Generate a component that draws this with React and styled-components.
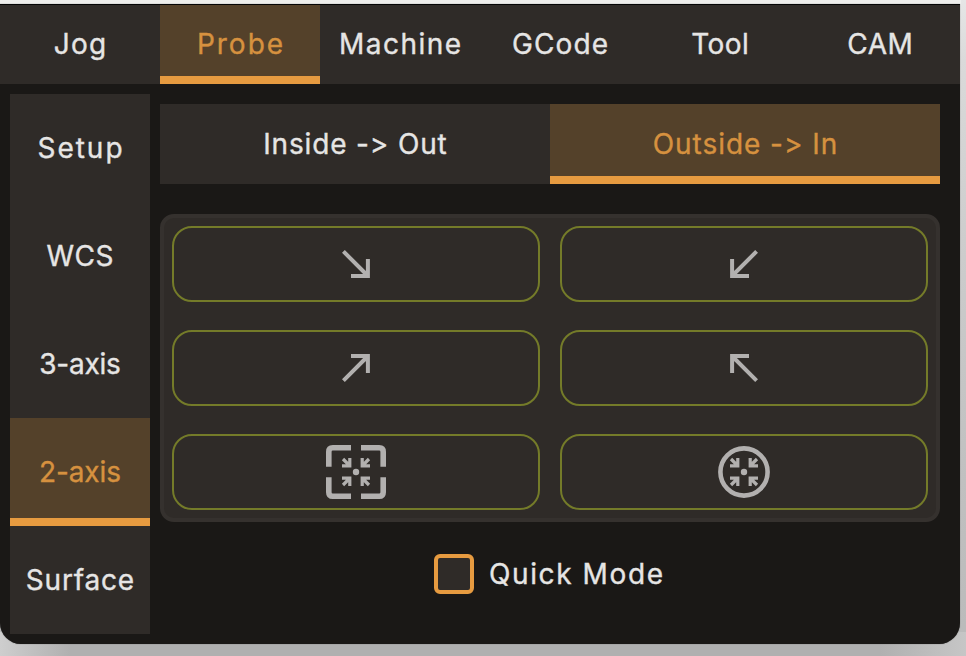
import React from "react";
import styled, { createGlobalStyle, css } from "styled-components";

const color = {
  base: "#1a1816",
  surface: "#2f2b28",
  edge: "#35312e",
  activeBg: "#54412a",
  accent: "#e79b40",
  activeText: "#d6913f",
  text: "#e6e5e4",
  outline: "#747b29",
  icon: "#b2b0af",
};

const GlobalStyle = createGlobalStyle`
  *, *::before, *::after { box-sizing: border-box; }
  html, body { margin: 0; height: 656px; overflow: hidden; }
  button { border: 0; padding: 0; margin: 0; background: none; color: inherit; font: inherit; }
`;

const Desktop = styled.div`
  width: 966px;
  height: 656px;
  padding-top: 4px;
  background:
    linear-gradient(90deg, #cecece 0, #b0b0b0 70px, #b0b0b0 880px, #c6c6c6 966px) 0 100% / 966px 24px no-repeat,
    linear-gradient(#eeeeec, #eeeeec) 0 0 / 961px 4px no-repeat,
    linear-gradient(180deg, #e6e6e6 0, #dadada 60px, #cdcdcd 240px, #c0c0c0 480px, #bababa 656px);
  color: ${color.text};
  font-family: Inter, "Liberation Sans", sans-serif;
  font-size: 28px;
  line-height: 34px;
  font-feature-settings: "calt" 0;
`;

const Window = styled.div`
  width: 960px;
  height: 640px;
  display: flex;
  flex-direction: column;
  overflow: hidden;
  border-top: 1px solid #050505;
  border-radius: 0 0 21px 21px;
  background: ${color.base};
  box-shadow: 0 0 1px 0 #555;
`;

const TabBar = styled.nav`
  flex: none;
  display: grid;
  grid-template-columns: repeat(6, 1fr);
  height: 79px;
  background: ${color.surface};
`;

const activeTab = css`
  background: ${color.activeBg};
  color: ${color.activeText};
  box-shadow: inset 0 -8px 0 ${color.accent};
`;

const Tab = styled.button`
  display: flex;
  align-items: center;
  justify-content: center;
  padding-bottom: 1px;
  white-space: nowrap;
  ${(p) => p.$active && activeTab}
`;

const Label = styled.span`
  letter-spacing: ${(p) => p.$track}px;
  margin-right: ${(p) => -p.$track}px;
  white-space: nowrap;
  -webkit-text-stroke: 0.35px currentColor;
`;

const Body = styled.div`
  flex: 1;
  display: flex;
  gap: 10px;
  padding: 10px 20px 9px 10px;
`;

const SideBar = styled.nav`
  flex: none;
  width: 140px;
  height: 540px;
  display: grid;
  grid-template-rows: repeat(5, 1fr);
  background: ${color.surface};
`;

const Content = styled.main`
  flex: 1;
  display: flex;
  flex-direction: column;
  padding-top: 10px;
`;

const Directions = styled.div`
  display: grid;
  grid-template-columns: 1fr 1fr;
  height: 80px;
  background: ${color.surface};
`;

const Panel = styled.section`
  display: grid;
  grid-template-columns: 1fr 1fr;
  grid-template-rows: repeat(3, 76px);
  gap: 28px 20px;
  margin-top: 30px;
  padding: 8px;
  border: 4px solid ${color.edge};
  border-radius: 14px;
  background: ${color.surface};
`;

const ProbeButton = styled.button`
  display: flex;
  align-items: center;
  justify-content: center;
  && {
    border: 2px solid ${color.outline};
  }
  border-radius: 20px;
`;

const Icon = styled.svg`
  display: block;
  fill: none;
  stroke: ${color.icon};
  transform: rotate(${(p) => p.$turn || 0}deg);
`;

const QuickMode = styled.label`
  display: flex;
  align-items: center;
  justify-content: center;
  gap: 15px;
  height: 40px;
  margin-top: 32px;
  padding-right: 3px;
`;

const CheckBox = styled.span`
  width: 40px;
  height: 40px;
  border: 4px solid ${color.accent};
  border-radius: 6px;
  background: ${color.surface};
`;

const tabs = [
  { text: "Jog", track: 1.2 },
  { text: "Probe", track: 2, active: true },
  { text: "Machine", track: 1.5 },
  { text: "GCode", track: 1.1 },
  { text: "Tool", track: 0.5 },
  { text: "CAM", track: 0.5 },
];

const sections = [
  { text: "Setup", track: 2 },
  { text: "WCS", track: 0.5 },
  { text: "3-axis", track: -0.2 },
  { text: "2-axis", track: -0.1, active: true },
  { text: "Surface", track: 0.8 },
];

const directions = [
  { text: "Inside -> Out", track: 0.85 },
  { text: "Outside -> In", track: 0.95, active: true },
];

const TabItem = ({ item }) => (
  <Tab $active={item.active}>
    <Label $track={item.track}>{item.text}</Label>
  </Tab>
);

const Arrow = ({ turn }) => (
  <Icon width="28" height="28" viewBox="-14 -14 28 28" $turn={turn} strokeWidth="4">
    <path d="M-12.6 -12.6 L11.5 11.5 M11.9 -5 V11.9 H-5" />
  </Icon>
);

const Converge = () => (
  <>
    {[0, 90, 180, 270].map((angle) => (
      <path
        key={angle}
        transform={`rotate(${angle})`}
        strokeWidth="3.2"
        d="M-13 -13 L-6 -6 M-6.2 -14 V-6.2 H-14"
      />
    ))}
    <circle r="3.2" fill={color.icon} stroke="none" />
  </>
);

const PocketRect = () => (
  <Icon width="60" height="54" viewBox="-30 -27 60 54">
    <path
      strokeWidth="5.6"
      d="M-5 -24.2 H-23.2 Q-27.2 -24.2 -27.2 -20.2 V-5.2 M5 -24.2 H23.2 Q27.2 -24.2 27.2 -20.2 V-5.2 M-5 24.2 H-23.2 Q-27.2 24.2 -27.2 20.2 V5.2 M5 24.2 H23.2 Q27.2 24.2 27.2 20.2 V5.2"
    />
    <Converge />
  </Icon>
);

const PocketCircle = () => (
  <Icon width="54" height="54" viewBox="-27 -27 54 54">
    <circle r="23.6" strokeWidth="4.6" />
    <Converge />
  </Icon>
);

export default function App() {
  return (
    <>
      <GlobalStyle />
      <Desktop>
        <Window>
          <TabBar>
            {tabs.map((t) => <TabItem key={t.text} item={t} />)}
          </TabBar>
          <Body>
            <SideBar>
              {sections.map((t) => <TabItem key={t.text} item={t} />)}
            </SideBar>
            <Content>
              <Directions>
                {directions.map((t) => <TabItem key={t.text} item={t} />)}
              </Directions>
              <Panel>
                <ProbeButton><Arrow turn={0} /></ProbeButton>
                <ProbeButton><Arrow turn={90} /></ProbeButton>
                <ProbeButton><Arrow turn={270} /></ProbeButton>
                <ProbeButton><Arrow turn={180} /></ProbeButton>
                <ProbeButton><PocketRect /></ProbeButton>
                <ProbeButton><PocketCircle /></ProbeButton>
              </Panel>
              <QuickMode>
                <CheckBox />
                <Label $track={1.6}>Quick Mode</Label>
              </QuickMode>
            </Content>
          </Body>
        </Window>
      </Desktop>
    </>
  );
}
